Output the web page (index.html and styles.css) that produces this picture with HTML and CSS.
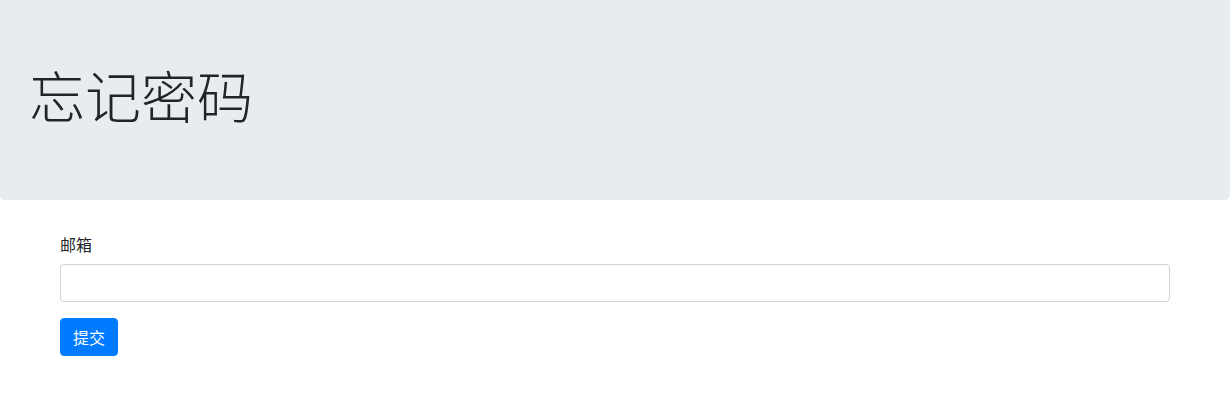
FILE: index.html
```html
<!DOCTYPE html>
<html lang="zh">
<head>
<meta charset="utf-8">
<title>忘记密码</title>
<link rel="stylesheet" href="styles.css">
</head>
<body>
<div class="jumbotron">
  <h1 class="display">忘记密码</h1>
</div>
<div class="container">
  <form class="form">
    <div class="form-group">
      <label class="label" for="email">邮箱</label>
      <input class="input" id="email" type="email">
    </div>
    <button class="btn" type="button">提交</button>
  </form>
</div>
</body>
</html>
```
FILE: styles.css
```css
* { box-sizing: border-box; }
html, body { margin: 0; padding: 0; }
body {
  font-family: "Noto Sans CJK SC", "Noto Sans", "Liberation Sans", sans-serif;
  font-size: 16px;
  line-height: 24px;
  color: #212529;
  background: #fff;
}
.jumbotron {
  background: #e9ecef;
  padding: 58px 29px 70px;
  border-radius: 0 0 4.8px 4.8px;
  margin-bottom: 32px;
}
.display {
  margin: 0;
  font-size: 56px;
  line-height: 72px;
  font-weight: 300;
}
.container {
  max-width: 1140px;
  margin: 0 auto;
  padding: 0 15px;
}
.form-group {
  margin-bottom: 16px;
}
.label {
  display: block;
  margin-bottom: 8px;
}
.input {
  display: block;
  width: 100%;
  height: 38px;
  padding: 6px 12px;
  font: inherit;
  color: #495057;
  background: #fff;
  border: 1px solid #ced4da;
  border-radius: 4px;
  outline: none;
}
.btn {
  display: inline-block;
  height: 38px;
  padding: 6px 12px;
  font: inherit;
  line-height: 24px;
  color: #fff;
  background: #007bff;
  border: 1px solid #007bff;
  border-radius: 4px;
  cursor: pointer;
}
```
